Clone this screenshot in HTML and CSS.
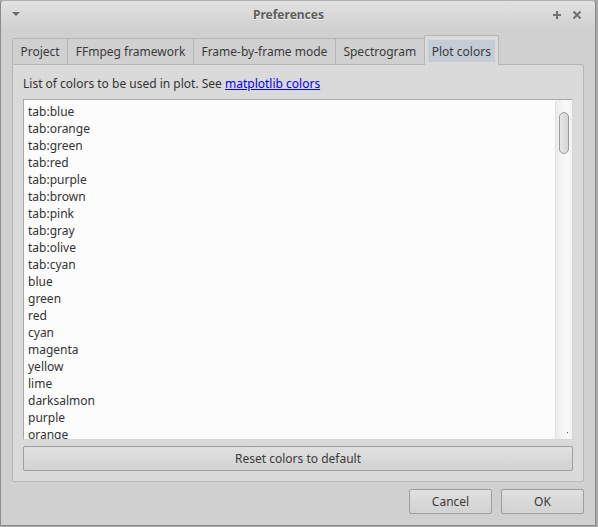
FILE: index.html
```html
<!DOCTYPE html>
<html>
<head>
<meta charset="utf-8">
<link rel="stylesheet" href="styles.css">
</head>
<body>
<div class="window">
  <div class="titlebar">
    <span class="tb-menu"><svg width="10" height="6" viewBox="0 0 10 6"><path d="M1 1 L9 1 L5 5 Z" fill="#6a6a6a"/></svg></span>
    <span class="tb-title">Preferences</span>
    <span class="tb-btns">
      <svg width="10" height="10" viewBox="0 0 10 10"><path d="M5 1 V9 M1 5 H9" stroke="#707070" stroke-width="2"/></svg>
      <svg width="10" height="10" viewBox="0 0 10 10"><path d="M1.5 1.5 L8.5 8.5 M8.5 1.5 L1.5 8.5" stroke="#707070" stroke-width="2"/></svg>
    </span>
  </div>
  <div class="body">
    <div class="tabs">
      <div class="tab">Project</div>
      <div class="tab">FFmpeg framework</div>
      <div class="tab">Frame-by-frame mode</div>
      <div class="tab">Spectrogram</div>
      <div class="tab active"><span>Plot colors</span></div>
    </div>
    <div class="pane">
      <div class="desc">List of colors to be used in plot. See <a href="#">matplotlib colors</a></div>
      <div class="listbox">
        <div class="items">
          <div>tab:blue</div>
          <div>tab:orange</div>
          <div>tab:green</div>
          <div>tab:red</div>
          <div>tab:purple</div>
          <div>tab:brown</div>
          <div>tab:pink</div>
          <div>tab:gray</div>
          <div>tab:olive</div>
          <div>tab:cyan</div>
          <div>blue</div>
          <div>green</div>
          <div>red</div>
          <div>cyan</div>
          <div>magenta</div>
          <div>yellow</div>
          <div>lime</div>
          <div>darksalmon</div>
          <div>purple</div>
          <div>orange</div>
        </div>
        <div class="scrollbar"><div class="thumb"></div><div class="grip"></div></div>
      </div>
      <button class="btn reset">Reset colors to default</button>
    </div>
    <div class="actions">
      <button class="btn dlg">Cancel</button>
      <button class="btn dlg">OK</button>
    </div>
  </div>
</div>
</body>
</html>
```
FILE: styles.css
```css
* { box-sizing: border-box; }
html, body { margin: 0; padding: 0; }
body {
  background: #a8a8a8;
  font-family: "Noto Sans", "Open Sans", sans-serif;
  font-size: 12px;
  color: #333;
  width: 598px;
  height: 527px;
  overflow: hidden;
}
.window {
  width: 596px;
  height: 526px;
  background: #d0d0d0;
  border: 1px solid #8c8c8c;
  border-top-color: #b0b0b0;
  border-radius: 4px 4px 0 0;
  display: flex;
  flex-direction: column;
}
.titlebar {
  height: 28px;
  flex: none;
  display: flex;
  align-items: center;
  padding: 0 10px 2px 10px;
  background: linear-gradient(#e2e2e2, #d0d0d0);
  border-radius: 4px 4px 0 0;
}
.tb-menu { width: 20px; display: flex; align-items: center; }
.tb-title {
  flex: 1;
  text-align: center;
  font-weight: bold;
  font-size: 12px;
  color: #5e5e5e;
  text-shadow: 0 1px 0 #f0f0f0;
  padding-right: 6px;
}
.tb-btns { display: flex; gap: 10px; align-items: center; padding-right: 3px; padding-top: 1px; }
.body {
  flex: 1;
  display: flex;
  flex-direction: column;
  padding: 6px 11px 0 11px;
}
.tabs {
  display: flex;
  height: 29px;
  align-items: flex-end;
  position: relative;
  z-index: 1;
}
.tab {
  height: 26px;
  padding: 0 7.5px;
  display: flex;
  align-items: center;
  background: #d0d0d0;
  border: 1px solid #b6b6b6;
  border-bottom: none;
  border-left: none;
  color: #3a3a3a;
  white-space: nowrap;
}
.tab:first-child { border-left: 1px solid #b6b6b6; border-radius: 2px 0 0 0; }
.tab.active {
  height: 30px;
  margin-bottom: -1px;
  background: #dadada;
  border-left: 1px solid #b6b6b6;
  margin-left: -1px;
  border-radius: 2px 2px 0 0;
  padding: 4px 3px 3px 3px;
  align-items: stretch;
}
.tab.active span {
  background: #c4ccd6;
  padding: 0 4px;
  display: flex;
  align-items: center;
}
.pane {
  height: 418px;
  background: #dadada;
  border: 1px solid #b6b6b6;
  border-radius: 0 2px 2px 2px;
  padding: 10px 10px 0 10px;
  display: flex;
  flex-direction: column;
}
.desc { height: 24px; color: #333; line-height: 17px; }
.desc a { color: #0000ff; text-decoration: underline; }
.listbox {
  height: 341px;
  background: #fcfcfc;
  border: 1px solid #a8a8a8;
  border-bottom-color: #d6d6d6;
  border-right-color: #d6d6d6;
  display: flex;
  overflow: hidden;
}
.items {
  flex: 1;
  padding: 3px 0 0 4px;
  line-height: 17px;
  color: #333;
}
.scrollbar {
  width: 17px;
  flex: none;
  background: linear-gradient(90deg, #ececec, #fafafa 60%, #f2f2f2);
  border-left: 1px solid #e2e2e2;
  position: relative;
  border-radius: 3px 3px 0 0;
}
.thumb {
  position: absolute;
  left: 3px;
  top: 12px;
  width: 10px;
  height: 42px;
  border: 1px solid #9a9a9a;
  border-radius: 5px;
  background: linear-gradient(90deg, #e6e6e6, #d4d4d4);
}
.grip {
  position: absolute;
  right: 4px;
  bottom: 6px;
  width: 1px;
  height: 1px;
  background: #555;
}
.btn {
  font-family: "Noto Sans", "Open Sans", sans-serif;
  font-size: 12px;
  color: #3a3a3a;
  background: linear-gradient(#e0e0e0, #d2d2d2);
  border: 1px solid #9e9e9e;
  border-radius: 2px;
  padding: 0;
}
.reset {
  margin-top: 6px;
  height: 25px;
  width: 550px;
}
.actions {
  display: flex;
  justify-content: flex-end;
  gap: 9px;
  padding: 7px 0 0 0;
}
.dlg {
  width: 83px;
  height: 25px;
}
```
